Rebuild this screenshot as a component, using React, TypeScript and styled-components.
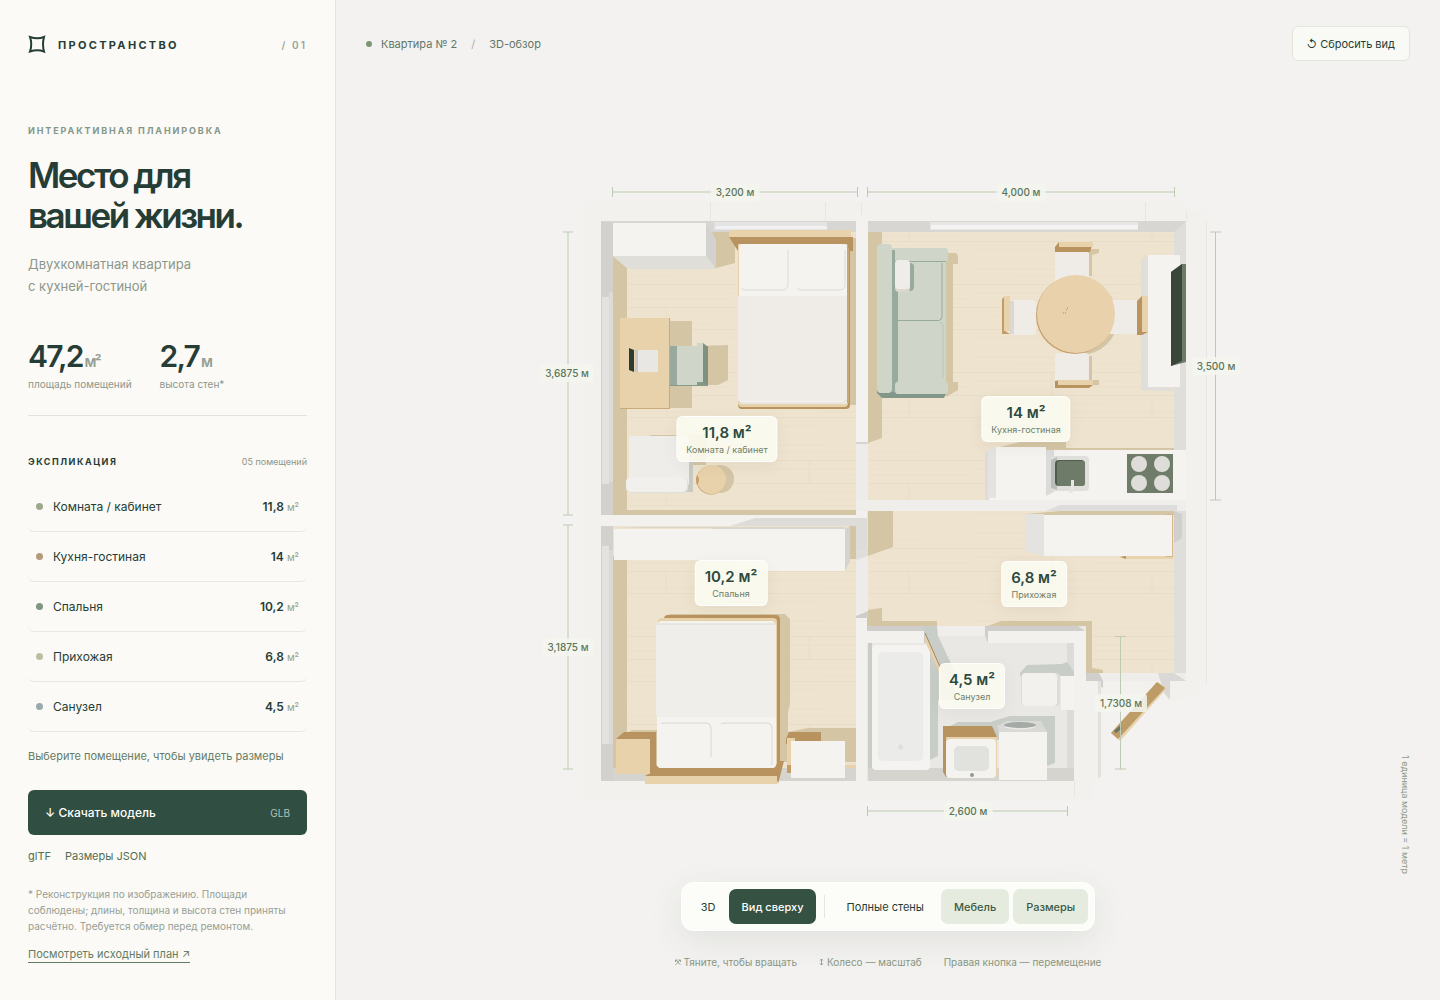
import React, { useState } from "react";
import styled, { createGlobalStyle } from "styled-components";

const ink = "#263d36";
const muted = "#8b978b";
const moss = "#657c64";

const GlobalStyle = createGlobalStyle`
  * { box-sizing: border-box; }
  body {
    margin: 0;
    background: #f3f2f0;
    color: ${ink};
    font-family: Inter, "Liberation Sans", sans-serif;
    font-synthesis: none;
    text-rendering: optimizeLegibility;
  }
  button { font: inherit; color: inherit; cursor: pointer; }
  h1, h2, p, ul, dl, dd, dt { margin: 0; padding: 0; }
`;

const Page = styled.div`
  display: grid;
  grid-template-columns: 336px minmax(0, 1fr);
  min-height: 100vh;
`;

/* Sidebar */

const Sidebar = styled.aside`
  padding: 32px 28px;
  background: #fbfaf6;
  border-right: 1px solid #e4e4de;
`;

const Brand = styled.header`
  display: flex;
  align-items: center;
  height: 26px;
  gap: 11px;
  svg { display: block; margin-bottom: 2px; }
`;

const BrandName = styled.span`
  font-size: 11px;
  font-weight: 700;
  letter-spacing: 0.21em;
`;

const BrandIndex = styled.span`
  margin-left: auto;
  font-size: 10px;
  font-weight: 600;
  letter-spacing: 0.21em;
  color: #9aa59a;
`;

const Eyebrow = styled.p`
  margin-top: 66px;
  font-size: 9px;
  line-height: 14px;
  font-weight: 700;
  letter-spacing: 0.21em;
  text-transform: uppercase;
  color: #85978a;
`;

const Title = styled.h1`
  margin-top: 17px;
  font-size: 35px;
  line-height: 40px;
  font-weight: 600;
  letter-spacing: -0.07em;
`;

const Lead = styled.p`
  margin-top: 18px;
  font-size: 13px;
  line-height: 22px;
  color: ${muted};
`;

const Stats = styled.dl`
  display: flex;
  gap: 28px;
  margin-top: 41px;
  padding-bottom: 23px;
  border-bottom: 1px solid #e2e3dc;
`;

const Stat = styled.div`
  display: flex;
  flex-direction: column-reverse;
`;

const StatValue = styled.dd`
  height: 36px;
  font-size: 30px;
  line-height: 36px;
  font-weight: 600;
  letter-spacing: -0.06em;
  small {
    font-size: 15px;
    line-height: 1;
    color: #94a094;
  }
`;

const StatLabel = styled.dt`
  margin-top: 2px;
  font-size: 10px;
  line-height: 16px;
  color: ${muted};
`;

const ListHead = styled.div`
  display: flex;
  justify-content: space-between;
  margin: 38px 0 12px;
  line-height: 16px;
  font-size: 9px;
  color: ${muted};
`;

const ListTitle = styled.h2`
  font-size: 9px;
  font-weight: 700;
  letter-spacing: 0.17em;
  color: ${ink};
`;

const RoomList = styled.ul`
  list-style: none;
`;

const RoomButton = styled.button`
  display: flex;
  align-items: center;
  width: 100%;
  height: 50px;
  padding: 0 8px;
  border: 0;
  border-bottom: 1px solid #e8e8e1;
  border-radius: 6px;
  background: transparent;
  font-size: 12px;
  text-align: left;
`;

const Dot = styled.span<{ $color: string; $size: number }>`
  flex: none;
  width: ${(p) => p.$size}px;
  height: ${(p) => p.$size}px;
  border-radius: 50%;
  background: ${(p) => p.$color};
`;

const RoomName = styled.span`
  flex: 1;
  margin-left: 10px;
`;

const RoomArea = styled.span`
  font-weight: 600;
  small {
    font-size: 10px;
    font-weight: 400;
    color: #94a087;
  }
`;

const PickHint = styled.p`
  margin-top: 16px;
  font-size: 11px;
  line-height: 16px;
  color: ${moss};
`;

const Download = styled.a`
  display: flex;
  justify-content: space-between;
  align-items: center;
  height: 45px;
  margin-top: 26px;
  padding: 0 17px;
  border-radius: 6px;
  background: #304e41;
  color: #fff;
  font-size: 12px;
  font-weight: 500;
  text-decoration: none;
  small {
    font-size: 10px;
    font-weight: 400;
    color: #b4c1b6;
  }
`;

const FileLinks = styled.nav`
  display: flex;
  gap: 14px;
  margin-top: 13px;
  font-size: 11px;
  line-height: 16px;
  a { color: #536d53; text-decoration: none; }
`;

const Note = styled.p`
  margin-top: 22px;
  font-size: 10px;
  line-height: 16px;
  color: #96a095;
`;

const SourceLink = styled.a`
  display: inline-block;
  margin-top: 13px;
  border-bottom: 1px solid ${moss};
  font-size: 11px;
  line-height: 15px;
  color: ${moss};
  text-decoration: none;
`;

/* Stage */

const Stage = styled.main`
  position: relative;
  display: flex;
  flex-direction: column;
  align-items: center;
  padding-bottom: 30px;
`;

const TopBar = styled.div`
  display: flex;
  justify-content: space-between;
  align-items: center;
  align-self: stretch;
  padding: 26px 30px 0;
`;

const Crumbs = styled.div`
  display: flex;
  align-items: center;
  font-size: 11px;
  color: #657568;
  i { margin: 0 14px; font-style: normal; color: #a9b0a7; }
`;

const CrumbName = styled.span`
  margin-left: 9px;
`;

const ResetButton = styled.button`
  height: 35px;
  padding: 0 14px;
  border: 1px solid #e2e5da;
  border-radius: 6px;
  background: #f9faf5;
  font-size: 11px;
`;

const PlanArea = styled.div`
  display: flex;
  flex: 1;
  align-items: flex-end;
  padding-bottom: 52px;
`;

const Plan = styled.div`
  position: relative;
  width: 700px;
  height: 660px;
  svg { display: block; overflow: visible; }
`;

const DimensionTag = styled.span`
  position: absolute;
  transform: translate(-50%, -50%);
  padding: 3px 5px;
  border-radius: 3px;
  background: rgba(243, 245, 237, 0.9);
  font-size: 10px;
  line-height: 12px;
  font-weight: 500;
  white-space: nowrap;
  color: #5c7659;
`;

const RoomTag = styled.button`
  position: absolute;
  transform: translate(-50%, -50%);
  display: grid;
  height: 46px;
  padding: 6px 9px 5px;
  border: 1px solid rgba(255, 255, 255, 0.8);
  border-radius: 6px;
  background: rgba(251, 251, 241, 0.9);
  box-shadow: 0 4px 16px rgba(60, 70, 50, 0.06);
  text-align: center;
  white-space: nowrap;
  strong {
    font-size: 15px;
    line-height: 20px;
    font-weight: 600;
    color: #2d4a3e;
  }
  span {
    font-size: 9px;
    line-height: 13px;
    color: #6c7f6b;
  }
`;

const Toolbar = styled.div`
  display: flex;
  align-items: center;
  gap: 4px;
  padding: 6px;
  border: 1px solid #fff;
  border-radius: 12px;
  background: #fcfdf8;
  box-shadow: 0 10px 35px rgba(50, 70, 50, 0.09);
`;

const ViewSwitch = styled.div`
  display: flex;
`;

const ToolButton = styled.button<{ $tone: "plain" | "solid" | "soft" }>`
  height: 35px;
  padding: 0 13px;
  border: 0;
  border-radius: 7px;
  font-size: 11px;
  font-weight: ${(p) => (p.$tone === "plain" ? 400 : 500)};
  color: ${(p) => ({ plain: ink, solid: "#fff", soft: "#3e5c43" })[p.$tone]};
  background: ${(p) => ({ plain: "transparent", solid: "#355141", soft: "#e5ebdf" })[p.$tone]};
`;

const Separator = styled.span`
  width: 1px;
  height: 23px;
  margin: 0 4px;
  background: #e3e7de;
`;

const Hints = styled.div`
  display: flex;
  gap: 22px;
  margin-top: 23px;
  font-size: 10px;
  line-height: 16px;
  color: #879783;
`;

const Hint = styled.span`
  display: flex;
  align-items: center;
  gap: 3px;
`;

const ScaleNote = styled.span`
  position: absolute;
  right: 29px;
  bottom: 126px;
  writing-mode: vertical-rl;
  font-size: 9px;
  line-height: 12px;
  color: #8c9a88;
`;

/* Data */

const rooms = [
  { name: "Комната / кабинет", area: "11,8", color: "#9ca88a", x: 189, y: 269 },
  { name: "Кухня-гостиная", area: "14", color: "#b59a78", x: 488, y: 249 },
  { name: "Спальня", area: "10,2", color: "#809683", x: 193, y: 413 },
  { name: "Прихожая", area: "6,8", color: "#b9c1a2", x: 496, y: 414 },
  { name: "Санузел", area: "4,5", color: "#98aaab", x: 434, y: 516 },
];

const dimensions = [
  { text: "3,200 м", x: 197, y: 22 },
  { text: "4,000 м", x: 483, y: 22 },
  { text: "3,6875 м", x: 29, y: 203 },
  { text: "3,500 м", x: 678, y: 196 },
  { text: "3,1875 м", x: 30, y: 477 },
  { text: "1,7308 м", x: 583, y: 533 },
  { text: "2,600 м", x: 430, y: 641 },
];

/* Drawing */

const oak = "#e8d2ab";
const oakDark = "#b8935f";
const white = "#f4f3ef";
const wall = "#d7d6d2";
const shade = "#d4c5a5";
const sage = "#d0d5ca";
const sageDark = "#98aa9e";

const Shape = ({ d, f }: { d: string; f: string }) => <path d={d} fill={f} />;

const Box = ({ x, y, w, h, f, r = 0 }: { x: number; y: number; w: number; h: number; f: string; r?: number }) => (
  <rect x={x} y={y} width={w} height={h} rx={r} fill={f} />
);

const WorkRoom = () => (
  <g>
    <Box x={601} y={221} w={255} h={294} f={wall} />
    <Box x={613} y={232} w={243} h={283} f="url(#wood)" />
    <Shape d="M601 221L613 223V515H601Z" f="#d2d1cd" />
    <Box x={602} y={297} w={7} h={187} f="#e2e2e1" />
    <Box x={609} y={292} w={4} h={190} f="#dcdbd8" />
    <Shape d="M613 256L627 268V510H856V515H613Z" f={shade} />
    <Shape d="M712 232H735V263L716 268Z" f={shade} />
    <Box x={714} y={222} w={113} h={8} f="#e5e4e4" />
    <Box x={716} y={226} w={111} h={3} f="#f2f1f1" />
    <Box x={613} y={223} w={93} h={33} f={white} />
    <Shape d="M613 256H706L716 269H628Z" f="#dfded9" />
    <Shape d="M706 223L716 240V269L706 256Z" f="#d3d2ce" />
    <Box x={849} y={238} w={7} h={167} f={shade} />
    <Box x={738} y={240} w={112} h={169} r={4} f={oakDark} />
    <Box x={738} y={240} w={110} h={167} r={4} f={oak} />
    <Box x={847} y={246} w={2} h={157} f="#cba672" />
    <Shape d="M729 237L738 251V244H847L850 251H853V237Z" f={oakDark} />
    <Box x={729} y={230} w={122} h={7} f={oak} />
    <Box x={739} y={244} w={108} h={160} r={3} f={white} />
    <Box x={738} y={296} w={109} h={105} f="#efece8" />
    <path d="M739 401Q740 404 745 403H841Q846 403 847 399" fill="none" stroke="#dcd9d2" />
    <path d="M741 288Q742 290 746 290H783Q788 289 788 284V250M797 288Q798 290 802 290H840Q845 289 845 285V250" fill="none" stroke="#dcdbd5" />
    <Box x={670} y={321} w={22} h={87} f={shade} />
    <Shape d="M700 346L728 345V380L718 385H700Z" f={shade} />
    <Box x={620} y={318} w={50} h={91} f="#c9aa79" />
    <Box x={620} y={318} w={49} h={90} f={oak} />
    <Box x={670} y={346} w={38} h={40} f="#879a89" />
    <Box x={670} y={346} w={7} h={39} f={sageDark} />
    <Shape d="M677 346H697V343H703V382H697V385H677Z" f={sage} />
    <Shape d="M703 343L708 347V385L703 382Z" f="#80927f" />
    <Shape d="M629 348L634 350V372L629 370Z" f="#2d3c33" />
    <Box x={635} y={350} w={3} h={22} f="#c9c8c6" />
    <Box x={638} y={350} w={20} h={22} f="#e9e7e4" />
    <Shape d="M650 435H706V465H693V492H640Z" f={shade} />
    <circle cx="720" cy="479" r="14" fill={shade} />
    <Box x={680} y={447} w={13} h={45} r={3} f="#c9cbc0" />
    <Box x={629} y={436} w={60} h={50} r={3} f="#eeede9" />
    <Box x={626} y={477} w={62} h={16} r={5} f="#e0dfda" />
    <Box x={626} y={477} w={61} h={15} r={5} f="#f1f0ec" />
    <circle cx="711" cy="480" r="14.500" fill="#c7a06d" />
    <circle cx="711.500" cy="479.500" r="14.500" fill={oak} />
    <path d="M697 475Q701 480 697 485Q695 480 697 475Z" fill="#c79c69" />
  </g>
);

const Bedroom = () => (
  <g>
    <Box x={601} y={526} w={255} h={255} f="#d5d4cf" />
    <Box x={613} y={526} w={243} h={242} f="url(#wood)" />
    <Box x={601} y={526} w={12} h={255} f="#d2d1cd" />
    <Box x={602} y={546} w={7} h={198} f="#e2e2e1" />
    <Box x={609} y={550} w={4} h={194} f="#dad9d6" />
    <Box x={613} y={556} w={14} h={212} f={shade} />
    <Shape d="M627 733L632 730H657V768H627Z" f={shade} />
    <Shape d="M665 616L670 614H785L790 619V704L788 712V732L808 728H856V762H780V616Z" f={shade} />
    <Box x={856} y={514} w={11} h={267} f="#efeeeb" />
    <Box x={850} y={526} w={6} h={33} f={shade} />
    <Shape d="M845 529L850 526V561L845 571Z" f="#d4d3cf" />
    <Shape d="M614 529H845V571H735V560H614Z" f={white} />
    <Shape d="M613 528L640 527H845V529H712V528Z" f="#d9d6cd" />
    <Box x={664} y={615} w={116} h={155} r={4} f={oakDark} />
    <Box x={658} y={618} w={119} h={150} r={4} f={oak} />
    <Box x={657} y={621} w={119} h={147} r={5} f={white} />
    <Box x={656} y={624} w={120} h={93} r={3} f="#efeeea" />
    <path d="M658 624H775" stroke="#dcdcd4" />
    <Shape d="M616 739L624 732H656V765L660 768H774L779 761H784L778 784L776 776H645L650 773V739Z" f={oakDark} />
    <Box x={616} y={739} w={34} h={35} f={oak} />
    <Box x={645} y={776} w={132} h={8} f={oak} />
    <Box x={657} y={717} w={119} h={51} r={4} f={white} />
    <path d="M661 724Q661 723 664 723H707Q711 724 711 728V757M721 724Q722 723 725 723H768Q772 724 772 728V765" fill="none" stroke="#d8d8d2" />
    <Shape d="M786 739L789 732H821V744H786Z" f={oakDark} />
    <Box x={787} y={738} w={8} h={35} f={oak} />
    <Box x={787} y={765} w={4} h={8} f="#c69d66" />
    <Box x={791} y={741} w={54} h={37} f={white} />
    <Box x={845} y={765} w={11} h={3} f={oak} />
  </g>
);

const Sofa = () => (
  <g>
    <Shape d="M946 253H956L958 256V264H953V382H958V390L946 397Z" f={shade} />
    <Shape d="M877 249H946V394L944 398H882L877 393Z" f="#82978a" />
    <Box x={877} y={244} w={15} h={149} r={4} f={sage} />
    <Box x={890} y={248} w={58} h={14} r={3} f={sage} />
    <Box x={892} y={262} w={54} h={122} f={sage} />
    <Shape d="M892 250H895V262L898 266V380L895 392H892Z" f={sageDark} />
    <path d="M895 261.500H946M895 320.500H939Q942 320 942 316V263" fill="none" stroke={sageDark} />
    <path d="M943 378V326Q943 323 940 322" fill="none" stroke="#bac3b8" />
    <Box x={895} y={382} w={53} h={12} r={3} f={sage} />
    <Box x={898} y={263} w={16} h={28} r={4} f={sageDark} />
    <Box x={895} y={262} w={15} h={30} r={4} f="#dcd8d0" />
    <Box x={895} y={260} w={15} h={29} r={4} f="#efede9" />
  </g>
);

const Dining = () => (
  <g>
    <Shape d="M1088 249H1099V253L1092 255V276H1088Z" f={shade} />
    <Shape d="M1089 356H1092V380H1099V385H1089Z" f={shade} />
    <ellipse cx="1080" cy="318" rx="38" ry="37" fill={shade} />
    <Box x={1055} y={252} w={34} h={32} r={2} f="#efece8" />
    <Shape d="M1055 252V247L1059 242H1093L1090 252Z" f={oakDark} />
    <Box x={1059} y={242} w={34} h={5} f={oak} />
    <Box x={1010} y={300} w={26} h={35} r={4} f="#efece8" />
    <Box x={1010} y={301} w={4} h={33} f="#dbd8d3" />
    <Shape d="M1002 299L1005 296V331L1010 334H1002Z" f="#c29c65" />
    <Box x={1004} y={296} w={6} h={35} f={oak} />
    <Box x={1108} y={300} w={30} h={34} f="#efece8" />
    <Box x={1055} y={353} w={34} h={30} r={4} f="#efece8" />
    <Shape d="M1055 381L1060 380H1093V385L1089 388H1055Z" f={oakDark} />
    <Box x={1058} y={380} w={35} h={5} f={oak} />
    <circle cx="1075" cy="315" r="39" fill="#c7a06d" />
    <circle cx="1076" cy="314" r="39" fill="#e9d1ac" />
    <path d="M1063 313h1M1065 313h1M1066 310h1M1067 308h1" stroke="#a98d62" />
  </g>
);

const Living = () => (
  <g>
    <Box x={868} y={221} w={318} h={290} f={wall} />
    <Box x={868} y={232} w={306} h={268} f="url(#wood)" />
    <Shape d="M1186 221L1174 232V511H1186Z" f="#dfdeda" />
    <Box x={930} y={222} w={208} h={8} f="#e7e6e5" />
    <Box x={931} y={225} w={207} h={4} f="#f4f3f3" />
    <Shape d="M868 232H882V438L868 443Z" f={shade} />
    <Sofa />
    <Dining />
    <Shape d="M1141 260L1148 255V387L1174 388L1172 391L1141 390Z" f="#dfdeda" />
    <Box x={1148} y={255} w={32} h={132} f={white} />
    <Shape d="M1137 301L1142 296V331L1148 332L1142 335H1137Z" f={oakDark} />
    <Box x={1142} y={296} w={6} h={36} f={oak} />
    <Shape d="M1171 272L1182 264H1186V362L1171 366Z" f="#6d7a68" />
    <Shape d="M1171 272L1182 264V361L1171 366Z" f="#3a4639" />
    <Shape d="M1000 447L1020 442H1066V448H1174V451H1000Z" f={shade} />
    <Shape d="M985 452L996 447V500H985Z" f="#dddcd8" />
    <Box x={989} y={450} w={197} h={50} f="#f4f3f0" />
    <Shape d="M988 451L996 447V498H988Z" f="#e4e3e0" />
    <Shape d="M1046 450H1054V492L1046 496Z" f="#dcdbd9" />
    <Box x={996} y={447} w={50} h={51} f={white} />
    <Box x={1051} y={456} w={38} h={35} r={4} f="#e0dfdc" />
    <Shape d="M1051 460L1057 457V490L1051 488Z" f="#b9bebb" />
    <Box x={1055} y={460} w={30} h={26} r={4} f="#4e5d4e" />
    <Box x={1057} y={461} w={28} h={25} r={3} f="#6f7b69" />
    <Shape d="M1071 480H1074V490L1072 493H1069V490H1071Z" f="#e6e5e2" />
    <Box x={1127} y={454} w={46} h={39} f="#707c6a" />
    {[1139, 1162].map((cx) => [464, 483].map((cy) => <circle key={`${cx}-${cy}`} cx={cx} cy={cy} r="8" fill="#dfddd9" />))}
  </g>
);

const Hall = () => (
  <g>
    <Box x={867} y={511} w={307} h={163} f="url(#wood)" />
    <Shape d="M1174 511H1186V681H1174Z" f="#dfdeda" />
    <Shape d="M1174 511L1182 514V538L1174 543Z" f="#d0cfcc" />
    <Shape d="M868 511H893V547L868 556Z" f={shade} />
    <Shape d="M867 610L882 608V621H937V627H867Z" f={shade} />
    <Shape d="M988 626L1001 621H1092V668L1103 670V688L1086 673V626Z" f={shade} />
    <Shape d="M1026 514L1060 511H1174V515H1026Z" f={shade} />
    <Shape d="M1026 514H1044V556L1026 551Z" f="#e4e3df" />
    <Shape d="M1120 556H1173V559H1126Z" f={oak} />
    <Shape d="M1120 557L1126 556V559Z" f={oakDark} />
    <Box x={1166} y={514} w={7} h={43} f="#d6b88a" />
    <Box x={1044} y={515} w={128} h={41} f={white} />
  </g>
);

const Bathroom = () => (
  <g>
    <Box x={867} y={626} w={219} h={155} f="#e9e8e5" />
    <Shape d="M867 626H925V632H867Z" f="#cfcecb" />
    <Shape d="M985 626H1078L1086 632H988V643L985 636Z" f="#cfcecb" />
    <Box x={867} y={631} w={57} h={12} f="#f2f1ee" />
    <Box x={937} y={626} w={48} h={10} f="#efeeec" />
    <Shape d="M868 643H872V768H1067V771H868Z" f="#c9cdc8" />
    <Shape d="M924 626H937L938 636L955 672V700H938V756L930 760V643H924Z" f="#c9cdc8" />
    <Shape d="M1067 643H1074V768H1067Z" f="#dcdbd7" />
    <Box x={868} y={768} w={206} h={13} f="#d5d4cf" />
    <Box x={872} y={645} w={58} h={125} r={4} f="#f4f3f1" />
    <Box x={878} y={652} w={45} h={109} r={5} f="#ebebe9" />
    <circle cx="900.500" cy="747" r="2.500" fill="#dedfdc" />
    <Shape d="M925 632L951 690L948 692L925 641Z" f={oak} />
    <path d="M925 633L941 669" stroke="#9f8660" />
    <Shape d="M1020 673L1027 665L1062 664L1067 662L1074 672V676H1020Z" f="#c9cdc8" />
    <Box x={1021} y={673} w={39} h={33} r={4} f="#dcdcd8" />
    <Box x={1022} y={673} w={35} h={33} r={4} f="#f2f1ee" />
    <Box x={1061} y={676} w={13} h={34} f={white} />
    <Shape d="M946 728L958 722H990L1010 716H1055V763L1047 766V740H960Z" f="#c9cdc8" />
    <Shape d="M943 726H992L997 737V777H946L943 772Z" f={oakDark} />
    <Shape d="M946 737H997V777H948Z" f={oak} />
    <Box x={946} y={739} w={50} h={39} r={4} f={white} />
    <Box x={954} y={746} w={35} h={25} r={5} f="#e1e1dd" />
    <Box x={970} y={773} w={4} h={4} r={2} f="#8f9a92" />
    <Shape d="M997 726L1007 721H1041L1047 732H999Z" f="#d9d9d5" />
    <ellipse cx="1020" cy="725" rx="16" ry="3" fill="#a4aaa5" />
    <path d="M1005 727Q1020 731 1035 727" fill="none" stroke="#eeeeea" />
    <Box x={999} y={732} w={48} h={48} f={white} />
    <Shape d="M988 631H1086V781H1074V643H988Z" f="#f2f1ee" />
  </g>
);

const Entrance = () => (
  <g>
    <Box x={1086} y={673} w={100} h={8} f="#eeedea" />
    <Shape d="M1086 673H1099L1103 681V686H1098L1086 681Z" f="#d0cfcb" />
    <Shape d="M1098 681H1101V777L1094 780V681Z" f="#e2e1df" />
    <Box x={1074} y={681} w={24} h={99} f="#f2f1ee" />
    <Shape d="M1158 673H1174L1186 681H1170V700L1164 693Z" f="#d9d8d4" />
    <Shape d="M1157 682L1167 688L1120 741L1111 733Z" f={oak} />
    <Shape d="M1157 682L1165 688L1118 739L1111 733Z" f="#be9c68" />
    <path d="M1115 732L1121 727" stroke="#697665" strokeWidth="3" />
  </g>
);

const Dimensions = () => (
  <path
    d="M612.500 187V197M612.500 192H857.500M857.500 187V197M867.500 187V197M867.500 192H1174.500M1174.500 187V197M563 232H573M568 232V515M563 515H573M563 525H573M568 525V769M563 769H573M1210 232H1221M1215.500 232V500M1210 500H1221M1115 636.500H1126M1120.500 636.500V769M1115 769H1126M867.500 806V816M867.500 811H1067.500M1067.500 806V816"
    fill="none"
    stroke="#bccbb1"
  />
);

const PlanDrawing = () => (
  <svg width="700" height="660" viewBox="538 170 700 660" role="img" aria-label="План квартиры">
    <defs>
      <pattern id="wood" width="243" height="88" patternUnits="userSpaceOnUse">
        <rect width="243" height="88" fill="#eee3ce" />
        <path d="M0 5H100M40 12H190M0 29H150M120 35H243M20 52H130M90 60H230M0 74H90M110 80H200" stroke="#ece0ca" />
        <path d="M0 20.500H243M0 43.500H243M0 65.500H243M80 21V43M180 44V65" stroke="#eaddc6" />
      </pattern>
    </defs>
    <path d="M583 202H1186V211H1207V684L1186 700H1094V800H583Z" fill="#f2f1ee" />
    <path d="M710.500 202V221M825.500 202V221M861.500 202V221M1145.500 202V221M1186.500 211V221M1206.500 221V684M1074.500 781V798" stroke="#e7e6e3" />
    <WorkRoom />
    <Bedroom />
    <Living />
    <Box x={856} y={215} w={12} h={228} f="#f3f2f0" />
    <Box x={856} y={443} w={12} h={57} f="#edecea" />
    <Box x={856} y={442} w={12} h={2} f="#d5d4d0" />
    <Box x={856} y={500} w={330} h={11} f="#efeeeb" />
    <Shape d="M1045 511L1060 505H1177V511Z" f="#dedddb" />
    <Hall />
    <Box x={601} y={515} w={266} h={11} f="#f2f1ed" />
    <Shape d="M730 526L755 518H867V550H856V526Z" f="#dddcd9" />
    <Box x={856} y={550} w={12} h={62} f="#edecea" />
    <Shape d="M856 550H868V556L856 560Z" f="#dfdedb" />
    <Shape d="M856 616L868 611V618H856Z" f="#cfcecb" />
    <Bathroom />
    <Box x={856} y={618} w={11} h={163} f="#f2f1ee" />
    <Entrance />
    <Dimensions />
  </svg>
);

const RotateGlyph = () => (
  <svg width="6" height="7" viewBox="0 0 6 7" fill="none" stroke="currentColor" strokeWidth="0.800" aria-hidden="true">
    <path d="M1 1L5.500 6M5 1L0.500 6M0.500 3V1H2.500M3.500 1H5.500V3" />
  </svg>
);

const ZoomGlyph = () => (
  <svg width="5" height="8" viewBox="0 0 5 8" fill="none" stroke="currentColor" strokeWidth="0.900" aria-hidden="true">
    <path d="M2.500 1V7M1 2.500L2.500 1L4 2.500M1 5.500L2.500 7L4 5.500" />
  </svg>
);

export default function App() {
  const [view, setView] = useState("top");
  const [walls, setWalls] = useState(false);
  const [furniture, setFurniture] = useState(true);
  const [sizes, setSizes] = useState(true);

  return (
    <Page>
      <GlobalStyle />
      <Sidebar>
        <Brand>
          <svg width="19" height="19" viewBox="0 0 19 19" fill="none" stroke={ink} strokeWidth="2" aria-hidden="true">
            <path d="M2 2Q9.500 4.500 16 2Q14 9.500 16 16.500Q9.500 14 2 16.500Q4.500 9.500 2 2Z" />
          </svg>
          <BrandName>ПРОСТРАНСТВО</BrandName>
          <BrandIndex>/ 01</BrandIndex>
        </Brand>
        <Eyebrow>Интерактивная планировка</Eyebrow>
        <Title>
          Место для
          <br />
          вашей жизни.
        </Title>
        <Lead>
          Двухкомнатная квартира
          <br />с кухней-гостиной
        </Lead>
        <Stats>
          <Stat>
            <StatLabel>площадь помещений</StatLabel>
            <StatValue>
              47,2<small> м²</small>
            </StatValue>
          </Stat>
          <Stat>
            <StatLabel>высота стен*</StatLabel>
            <StatValue>
              2,7<small> м</small>
            </StatValue>
          </Stat>
        </Stats>
        <ListHead>
          <ListTitle>ЭКСПЛИКАЦИЯ</ListTitle>
          <span>05 помещений</span>
        </ListHead>
        <RoomList>
          {rooms.map((room) => (
            <li key={room.name}>
              <RoomButton type="button">
                <Dot $color={room.color} $size={7} />
                <RoomName>{room.name}</RoomName>
                <RoomArea>
                  {room.area} <small>м²</small>
                </RoomArea>
              </RoomButton>
            </li>
          ))}
        </RoomList>
        <PickHint>Выберите помещение, чтобы увидеть размеры</PickHint>
        <Download href="#glb">
          <span>↓ Скачать модель</span>
          <small>GLB</small>
        </Download>
        <FileLinks>
          <a href="#gltf">glTF</a>
          <a href="#json">Размеры JSON</a>
        </FileLinks>
        <Note>
          * Реконструкция по изображению. Площади соблюдены; длины, толщина и высота стен приняты расчётно. Требуется
          обмер перед ремонтом.
        </Note>
        <SourceLink href="#source">Посмотреть исходный план ↗</SourceLink>
      </Sidebar>

      <Stage>
        <TopBar>
          <Crumbs>
            <Dot $color="#7b9775" $size={6} />
            <CrumbName>Квартира № 2</CrumbName>
            <i>/</i>
            <span>3D-обзор</span>
          </Crumbs>
          <ResetButton type="button" onClick={() => setView("top")}>
            ↺ Сбросить вид
          </ResetButton>
        </TopBar>

        <PlanArea>
          <Plan>
            <PlanDrawing />
            {sizes &&
              dimensions.map((d) => (
                <DimensionTag key={d.text} style={{ left: d.x, top: d.y }}>
                  {d.text}
                </DimensionTag>
              ))}
            {rooms.map((room) => (
              <RoomTag key={room.name} type="button" style={{ left: room.x, top: room.y }}>
                <strong>{room.area} м²</strong>
                <span>{room.name}</span>
              </RoomTag>
            ))}
          </Plan>
        </PlanArea>

        <Toolbar>
          <ViewSwitch>
            <ToolButton type="button" $tone={view === "3d" ? "solid" : "plain"} onClick={() => setView("3d")}>
              3D
            </ToolButton>
            <ToolButton type="button" $tone={view === "top" ? "solid" : "plain"} onClick={() => setView("top")}>
              Вид сверху
            </ToolButton>
          </ViewSwitch>
          <Separator />
          <ToolButton type="button" $tone={walls ? "soft" : "plain"} onClick={() => setWalls(!walls)}>
            Полные стены
          </ToolButton>
          <ToolButton type="button" $tone={furniture ? "soft" : "plain"} onClick={() => setFurniture(!furniture)}>
            Мебель
          </ToolButton>
          <ToolButton type="button" $tone={sizes ? "soft" : "plain"} onClick={() => setSizes(!sizes)}>
            Размеры
          </ToolButton>
        </Toolbar>
        <Hints>
          <Hint>
            <RotateGlyph />
            Тяните, чтобы вращать
          </Hint>
          <Hint>
            <ZoomGlyph />
            Колесо — масштаб
          </Hint>
          <Hint>Правая кнопка — перемещение</Hint>
        </Hints>
        <ScaleNote>1 единица модели = 1 метр</ScaleNote>
      </Stage>
    </Page>
  );
}
